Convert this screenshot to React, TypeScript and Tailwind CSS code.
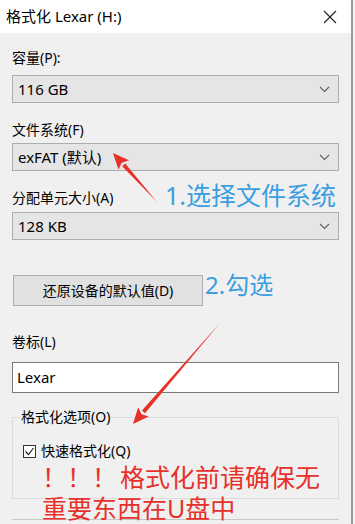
import React from "react";

const font = {
  fontFamily: '"Noto Sans", "Noto Sans CJK SC", sans-serif',
};

function Chevron() {
  return (
    <svg width="11" height="7" viewBox="0 0 11 7" className="shrink-0">
      <path d="M1 1l4.5 4.5L10 1" fill="none" stroke="#606060" strokeWidth="1.1" />
    </svg>
  );
}

function Dropdown({ value }: { value: string }) {
  return (
    <div className="h-[28px] flex items-center justify-between bg-[#e5e5e5] border border-[#adadad] pl-[5px] pr-[8px] text-[15px] text-black">
      <span>{value}</span>
      <Chevron />
    </div>
  );
}

function Arrow({ x1, y1, x2, y2 }: { x1: number; y1: number; x2: number; y2: number }) {
  // tapered red arrow, tip at (x2,y2)
  const dx = x2 - x1;
  const dy = y2 - y1;
  const len = Math.sqrt(dx * dx + dy * dy);
  const ux = dx / len;
  const uy = dy / len;
  const px = -uy;
  const py = ux;
  const headLen = 16;
  const headW = 7;
  const bx = x2 - ux * headLen;
  const by = y2 - uy * headLen;
  const shaft = `M${x1} ${y1} L${bx + px * 2} ${by + py * 2} L${bx - px * 2} ${by - py * 2} Z`;
  const head = `M${x2} ${y2} L${bx + px * headW} ${by + py * headW} L${bx + ux * 3} ${by + uy * 3} L${bx - px * headW} ${by - py * headW} Z`;
  return (
    <>
      <path d={shaft} fill="#e8302a" />
      <path d={head} fill="#e8302a" />
    </>
  );
}

export default function App() {
  return (
    <div className="relative w-[355px] h-[524px] overflow-hidden bg-[#f0f0f0]" style={font}>
      <div className="w-[353px] h-full border-r-2 border-[#9a9a9a] flex flex-col">
        {/* Title bar */}
        <div className="h-[33px] bg-white flex items-center justify-between pl-[6px] pr-[14px] shrink-0">
          <span className="text-[15px] text-black">格式化 Lexar (H:)</span>
          <svg width="14" height="14" viewBox="0 0 14 14">
            <path d="M1 1l12 12M13 1L1 13" stroke="#222" strokeWidth="1.1" />
          </svg>
        </div>

        <div className="flex flex-col px-[12px] pr-[12px] text-[14px] text-black">
          <div className="mt-[15px] h-[20px] leading-[20px]">容量(P):</div>
          <div className="mt-[7px]">
            <Dropdown value="116 GB" />
          </div>

          <div className="mt-[17px] h-[20px] leading-[20px]">文件系统(F)</div>
          <div className="mt-[3px]">
            <Dropdown value="exFAT (默认)" />
          </div>

          <div className="mt-[17px] h-[20px] leading-[20px] flex items-center">
            <span>分配单元大小(A)</span>
          </div>
          <div className="mt-[4px]">
            <Dropdown value="128 KB" />
          </div>

          <div className="mt-[35px] flex items-center">
            <div className="w-[190px] h-[31px] ml-[1px] bg-[#e1e1e1] border border-[#adadad] flex items-center justify-center text-[14px]">
              还原设备的默认值(D)
            </div>
            <span className="ml-[2px] -mt-[12px] text-[24px] leading-none text-[#3a9ee0]">2.勾选</span>
          </div>

          <div className="mt-[26px] h-[20px] leading-[20px]">卷标(L)</div>
          <div className="mt-[10px] h-[31px] bg-white border border-[#7a7a7a] flex items-center pl-[4px] text-[15px]">
            Lexar
          </div>

          {/* Group box */}
          <div className="mt-[24px] relative border border-[#dcdcdc] h-[82px] pl-[10px]">
            <span className="absolute -top-[11px] left-[7px] px-[1px] bg-[#f0f0f0] text-[14px] leading-[20px]">
              格式化选项(O)
            </span>
            <div className="mt-[24px] flex items-center">
              <div className="w-[13px] h-[13px] border border-[#333] bg-white flex items-center justify-center">
                <svg width="11" height="11" viewBox="0 0 11 11">
                  <path d="M1.5 5.5l3 3L9.5 2" fill="none" stroke="#222" strokeWidth="1.2" />
                </svg>
              </div>
              <span className="ml-[5px] text-[14px] leading-[18px]">快速格式化(Q)</span>
            </div>
          </div>
          <div className="mt-[20px] border-t border-[#c8c8c8]" />
        </div>
      </div>

      {/* annotations */}
      <div className="absolute left-[165px] top-[183px] text-[25px] leading-none text-[#3a9ee0]" style={font}>
        1.选择文件系统
      </div>
      <div
        className="absolute left-[42px] top-[462px] text-[25px] leading-[31px] text-[#e8302a]"
        style={font}
      >
        <div>
          ！！！<span className="ml-[3px]">格式化前请确保无</span>
        </div>
        <div>重要东西在U盘中</div>
      </div>
      <svg className="absolute left-0 top-0 pointer-events-none" width="355" height="524">
        <Arrow x1={157} y1={202} x2={113} y2={153} />
        <Arrow x1={220} y1={323} x2={133} y2={424} />
      </svg>
    </div>
  );
}
